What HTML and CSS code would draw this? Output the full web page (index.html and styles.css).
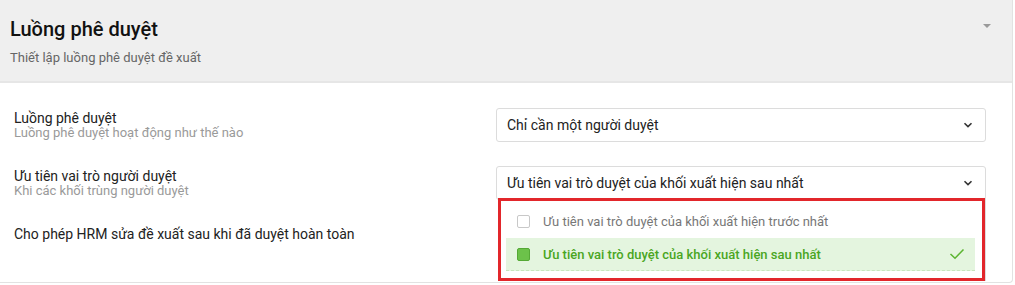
FILE: index.html
```html
<!DOCTYPE html>
<html lang="vi">
<head>
<meta charset="utf-8">
<link rel="stylesheet" href="styles.css">
</head>
<body>
<div class="card">
  <div class="card-header">
    <div class="head-text">
      <h1 class="title">Luồng phê duyệt</h1>
      <p class="subtitle">Thiết lập luồng phê duyệt đề xuất</p>
    </div>
    <span class="caret"></span>
  </div>
  <div class="card-body">
    <div class="row">
      <div class="label">
        <div class="label-main">Luồng phê duyệt</div>
        <div class="label-sub">Luồng phê duyệt hoạt động như thế nào</div>
      </div>
      <div class="select">
        <span class="select-value">Chỉ cần một người duyệt</span>
        <svg class="chev" width="10" height="6" viewBox="0 0 10 6"><path d="M1.5 1.2 L5 4.6 L8.5 1.2" fill="none" stroke="#333" stroke-width="1.6"/></svg>
      </div>
    </div>
    <div class="row">
      <div class="label">
        <div class="label-main">Ưu tiên vai trò người duyệt</div>
        <div class="label-sub">Khi các khối trùng người duyệt</div>
      </div>
      <div class="select open">
        <span class="select-value">Ưu tiên vai trò duyệt của khối xuất hiện sau nhất</span>
        <svg class="chev" width="10" height="6" viewBox="0 0 10 6"><path d="M1.5 1.2 L5 4.6 L8.5 1.2" fill="none" stroke="#333" stroke-width="1.6"/></svg>
        <div class="menu">
          <div class="option">
            <span class="cb"></span>
            <span class="opt-text">Ưu tiên vai trò duyệt của khối xuất hiện trước nhất</span>
          </div>
          <div class="option selected">
            <span class="cb checked"></span>
            <span class="opt-text">Ưu tiên vai trò duyệt của khối xuất hiện sau nhất</span>
            <svg class="tick" width="16" height="12" viewBox="0 0 16 12"><path d="M1.5 6 L6 10.2 L14.5 1.5" fill="none" stroke="#5cb531" stroke-width="1.5"/></svg>
          </div>
        </div>
      </div>
    </div>
    <div class="row row-short">
      <div class="label">
        <div class="label-main">Cho phép HRM sửa đề xuất sau khi đã duyệt hoàn toàn</div>
      </div>
      <div class="spacer"></div>
    </div>
  </div>
</div>
</body>
</html>
```

FILE: styles.css
```css
* { box-sizing: border-box; }
html, body { margin: 0; padding: 0; background: #ffffff; }
body {
  font-family: Roboto, "Noto Sans", "Liberation Sans", sans-serif;
  color: #222;
  width: 1015px;
  height: 285px;
  overflow: hidden;
}
.card {
  width: 1013px;
  height: 283px;
  border-right: 1px solid #e2e2e2;
  border-bottom: 1px solid #e2e2e2;
  border-bottom-right-radius: 4px;
  background: #fff;
}
.card-header {
  background: #efefef;
  height: 83px;
  border-bottom: 2px solid #e6e6e6;
  display: flex;
  justify-content: space-between;
  padding: 15px 21px 0 10px;
}
.title {
  margin: 0;
  font-size: 20px;
  font-weight: 500;
  line-height: 28px;
  color: #111;
}
.subtitle {
  margin: 7px 0 0;
  font-size: 13px;
  line-height: 16px;
  color: #666;
}
.caret {
  margin-top: 9px;
  width: 0;
  height: 0;
  border-left: 4px solid transparent;
  border-right: 4px solid transparent;
  border-top: 4px solid #9a9a9a;
}
.card-body {
  padding: 25px 26px 0 14px;
  display: flex;
  flex-direction: column;
  gap: 24px;
}
.row {
  display: flex;
  align-items: center;
  justify-content: space-between;
  height: 34px;
}
.row-short { height: 20px; }
.label-main {
  font-size: 14px;
  line-height: 16px;
  color: #222;
}
.label-sub {
  font-size: 13px;
  line-height: 14px;
  color: #9a9a9a;
}
.select {
  position: relative;
  width: 490px;
  height: 34px;
  border: 1px solid #dcdcdc;
  border-radius: 3px;
  display: flex;
  align-items: center;
  justify-content: space-between;
  padding: 0 12px 0 10px;
  font-size: 14px;
  color: #222;
}
.chev { display: block; }
.spacer { width: 490px; height: 20px; }
.menu {
  position: absolute;
  top: 31px;
  left: 1px;
  width: 487px;
  height: 83px;
  background: #fff;
  border: 3px solid #e2262b;
  box-shadow: 1px 0 0 #dddddd;
  padding: 4px 7px 0 5px;
  z-index: 5;
}
.option {
  display: flex;
  align-items: center;
  height: 33px;
  padding: 0 10px 0 11px;
  font-size: 13px;
  color: #777;
}
.cb {
  width: 13px;
  height: 13px;
  border: 1px solid #c8c8c8;
  border-radius: 2px;
  margin-right: 13px;
  flex: none;
  background: #fff;
}
.option.selected {
  background: #e4f5df;
  border-bottom: 1px dashed #c6e4bd;
  color: #4aa61f;
  font-weight: 500;
}
.cb.checked {
  background: #6cc24a;
  border-color: #55a936;
}
.opt-text { flex: 1; }
.tick { display: block; }
```
